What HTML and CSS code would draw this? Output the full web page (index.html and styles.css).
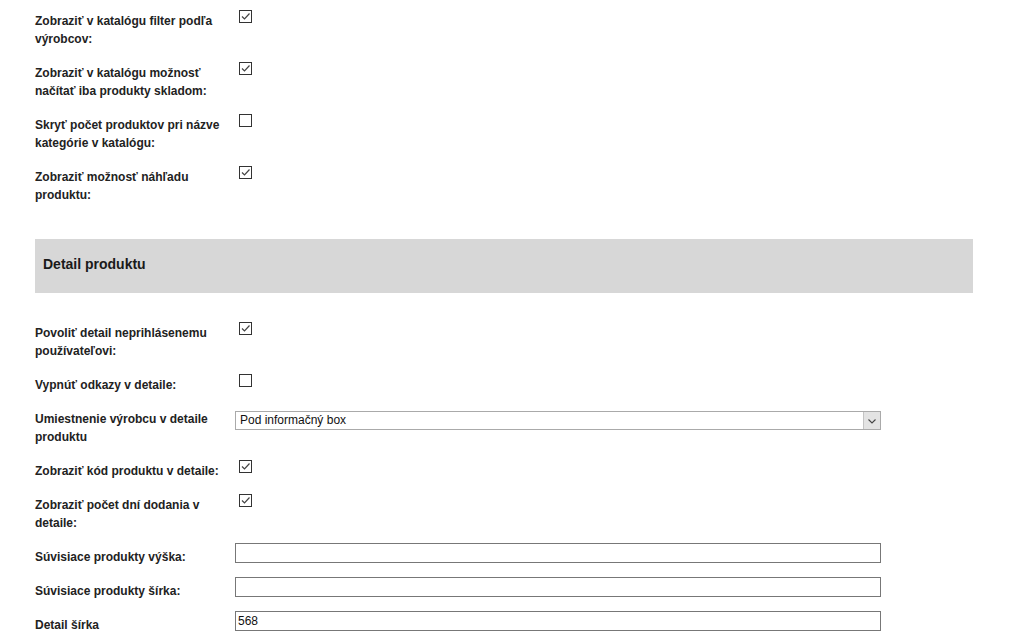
FILE: index.html
```html
<!DOCTYPE html>
<html lang="sk">
<head>
<meta charset="utf-8">
<link rel="stylesheet" href="styles.css">
</head>
<body>
<div class="page">
  <div class="rows">
    <div class="row"><div class="label">Zobraziť v katalógu filter podľa výrobcov:</div><div class="ctrl"><span class="cb"><svg viewBox="0 0 13 13" width="13" height="13"><path d="M3 6.5 L5.5 9 L10.5 3.5" fill="none" stroke="#444" stroke-width="1.2"/></svg></span></div></div>
    <div class="row"><div class="label">Zobraziť v katalógu možnosť načítať iba produkty skladom:</div><div class="ctrl"><span class="cb"><svg viewBox="0 0 13 13" width="13" height="13"><path d="M3 6.5 L5.5 9 L10.5 3.5" fill="none" stroke="#444" stroke-width="1.2"/></svg></span></div></div>
    <div class="row"><div class="label">Skryť počet produktov pri názve kategórie v katalógu:</div><div class="ctrl"><span class="cb"></span></div></div>
    <div class="row"><div class="label">Zobraziť možnosť náhľadu produktu:</div><div class="ctrl"><span class="cb"><svg viewBox="0 0 13 13" width="13" height="13"><path d="M3 6.5 L5.5 9 L10.5 3.5" fill="none" stroke="#444" stroke-width="1.2"/></svg></span></div></div>
  </div>

  <div class="section-head">Detail produktu</div>

  <div class="rows rows-2">
    <div class="row"><div class="label">Povoliť detail neprihlásenemu používateľovi:</div><div class="ctrl"><span class="cb"><svg viewBox="0 0 13 13" width="13" height="13"><path d="M3 6.5 L5.5 9 L10.5 3.5" fill="none" stroke="#444" stroke-width="1.2"/></svg></span></div></div>
    <div class="row"><div class="label">Vypnúť odkazy v detaile:</div><div class="ctrl"><span class="cb"></span></div></div>
    <div class="row"><div class="label">Umiestnenie výrobcu v detaile produktu</div><div class="ctrl"><div class="select"><span class="select-text">Pod informačný box</span><span class="select-btn"><svg viewBox="0 0 16 16" width="16" height="16"><path d="M4.5 6.5 L8 10 L11.5 6.5" fill="none" stroke="#444" stroke-width="1.1"/></svg></span></div></div></div>
    <div class="row"><div class="label">Zobraziť kód produktu v detaile:</div><div class="ctrl"><span class="cb"><svg viewBox="0 0 13 13" width="13" height="13"><path d="M3 6.5 L5.5 9 L10.5 3.5" fill="none" stroke="#444" stroke-width="1.2"/></svg></span></div></div>
    <div class="row"><div class="label">Zobraziť počet dní dodania v detaile:</div><div class="ctrl"><span class="cb"><svg viewBox="0 0 13 13" width="13" height="13"><path d="M3 6.5 L5.5 9 L10.5 3.5" fill="none" stroke="#444" stroke-width="1.2"/></svg></span></div></div>
    <div class="row"><div class="label">Súvisiace produkty výška:</div><div class="ctrl"><div class="input"></div></div></div>
    <div class="row"><div class="label">Súvisiace produkty šírka:</div><div class="ctrl"><div class="input"></div></div></div>
    <div class="row"><div class="label">Detail šírka</div><div class="ctrl"><div class="input">568</div></div></div>
  </div>
</div>
</body>
</html>
```

FILE: styles.css
```css
html, body {
  margin: 0;
  padding: 0;
  background: #ffffff;
}
body {
  font-family: "Liberation Sans", Arial, sans-serif;
  color: #222222;
}
.page {
  padding: 10px 0 0 35px;
  width: 938px;
}
.rows {
  display: flex;
  flex-direction: column;
  gap: 14px;
}
.rows-2 {
  margin-top: 29px;
}
.row {
  display: flex;
  align-items: flex-start;
}
.label {
  width: 200px;
  font-size: 12px;
  font-weight: bold;
  line-height: 18px;
  padding-top: 2px;
  flex: none;
}
.ctrl {
  flex: none;
  width: 646px;
}
.cb {
  display: block;
  width: 13px;
  height: 13px;
  box-sizing: border-box;
  border: 1px solid #333333;
  margin: 0 0 0 4px;
  background: #fff;
  position: relative;
}
.cb svg {
  position: absolute;
  left: -1px;
  top: -1px;
}
.section-head {
  margin-top: 35px;
  background: #d7d7d7;
  height: 54px;
  box-sizing: border-box;
  padding: 0 8px 4px;
  display: flex;
  align-items: center;
  font-size: 14px;
  font-weight: bold;
  color: #1a1a1a;
}
.select {
  margin-top: 3px;
  height: 19px;
  box-sizing: border-box;
  border: 1px solid #aaaaaa;
  display: flex;
  align-items: stretch;
  font-size: 12px;
  color: #111;
}
.select-text {
  flex: 1;
  padding-left: 4px;
  line-height: 17px;
}
.select-btn {
  width: 16px;
  background: #e3e3e3;
  border-left: 1px solid #c4c4c4;
  display: flex;
  align-items: center;
  justify-content: center;
}
.input {
  margin-top: -3px;
  height: 20px;
  box-sizing: border-box;
  border: 1px solid #777777;
  font-size: 12px;
  line-height: 18px;
  padding-left: 2px;
  color: #111;
}
```
